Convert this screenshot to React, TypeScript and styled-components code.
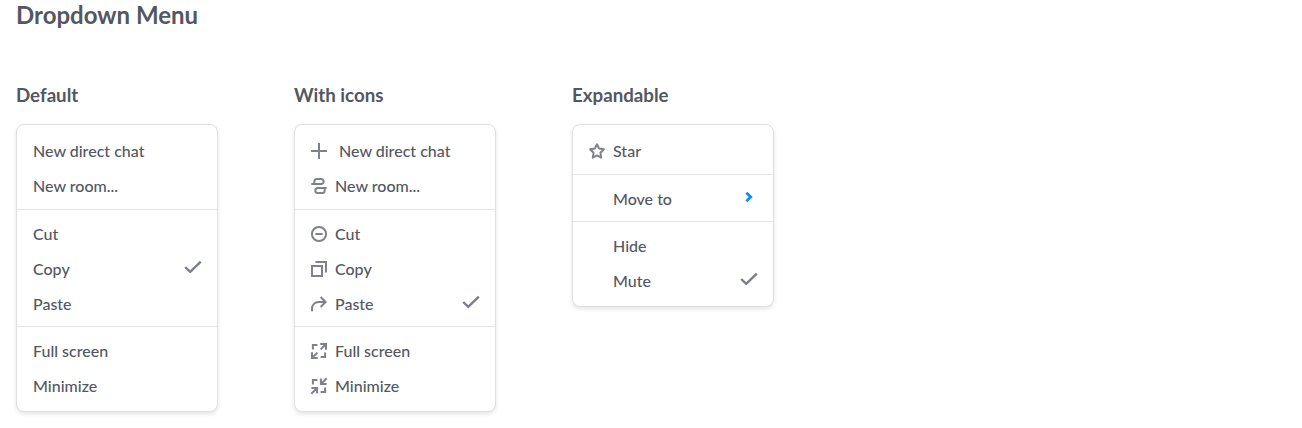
import React from "react";
import styled, { createGlobalStyle } from "styled-components";

const GlobalStyle = createGlobalStyle`
  body {
    margin: 0;
    background: #fff;
    color: #535762;
    font-family: Lato, "Liberation Sans", sans-serif;
    font-size: 16px;
    -webkit-font-smoothing: antialiased;
  }
`;

const Page = styled.main`
  box-sizing: border-box;
  min-height: 100vh;
  padding: 0 16px;
`;

const Title = styled.h1`
  margin: 0;
  height: 83px;
  font-size: 24px;
  line-height: 30px;
  font-weight: 700;
`;

const Columns = styled.div`
  display: flex;
  align-items: flex-start;
  gap: 76px;
`;

const Column = styled.section`
  width: 202px;
`;

const Heading = styled.h2`
  margin: 0 0 17px;
  font-size: 18.72px;
  line-height: 24px;
  font-weight: 700;
`;

const Menu = styled.div`
  box-sizing: border-box;
  border: 1px solid #dfe0e2;
  border-radius: 8px;
  background: #fff;
  box-shadow: 0 2px 4px rgba(0, 0, 0, 0.11);
`;

const Group = styled.div`
  padding: 6px 16px 5px;

  & + & {
    border-top: 1px solid #e4e5e6;
  }
  &:first-child {
    padding-top: 8px;
    padding-bottom: 6px;
  }
  &:last-child {
    padding-bottom: 8px;
  }
`;

const Row = styled.div<{ $indent?: boolean }>`
  display: flex;
  align-items: center;
  height: 35px;
  padding-left: ${(p) => (p.$indent ? 24 : 0)}px;
`;

const Label = styled.span`
  flex: 1;
  font-weight: 500;
  line-height: 20px;
  white-space: nowrap;
`;

const Icon = styled.svg<{ $gap?: number }>`
  flex: none;
  width: 16px;
  height: 16px;
  margin-right: ${(p) => p.$gap ?? 8}px;
  overflow: visible;
  fill: none;
  stroke: #7f828b;
  stroke-width: 2;
`;

const Mark = styled.svg<{ $accent?: boolean }>`
  flex: none;
  width: ${(p) => (p.$accent ? 8 : 18)}px;
  height: 12px;
  margin: 0 ${(p) => (p.$accent ? 4 : -1)}px 3px 0;
  overflow: visible;
  fill: none;
  stroke: ${(p) => (p.$accent ? "#0d8cf8" : "#7b7f88")};
  stroke-width: ${(p) => (p.$accent ? 2.8 : 2.4)};
`;

type IconName = "plus" | "room" | "cut" | "copy" | "paste" | "full" | "min" | "star";

const drawings: Record<IconName, React.ReactNode> = {
  plus: <path d="M8 0v16M0 8h16" />,
  room: (
    <>
      <path d="M.3 5.9h9.9A2.4 2.4 0 0 0 12.6 3.5 2.5 2.5 0 0 0 10.1 1H5.8a2.5 2.5 0 0 0-2.5 2.5v2.4" />
      <path d="M15.7 9.9H6.8a2.5 2.5 0 0 0 0 5h4.4a2.5 2.5 0 0 0 2.5-2.5V9.9" />
    </>
  ),
  cut: (
    <>
      <circle cx="8" cy="8" r="7.1" />
      <path d="M4.4 8h7.2" />
    </>
  ),
  copy: <path d="M1 5h10v10H1zM4.4 1H15v10.6" />,
  paste: <path d="M1 15.2v-2.7a6.5 6.5 0 0 1 6.5-6.5h7M9.6 1l5 5-5 5" />,
  full: (
    <path d="M1.9 6.4V1.9h4.5M9.6 14.1h4.5V9.6M9.2 1H15v5.8M9.6 6.4 15 1M1 9.2V15h5.8M6.4 9.6 1 15" />
  ),
  min: (
    <path d="M1.9 6.4V1.9h4.5M9.6 14.1h4.5V9.6M9.9.4v5.7h5.7M10 6l5.7-5.7M.4 9.9h5.7v5.7M6 10 .3 15.7" />
  ),
  star: (
    <path
      strokeLinejoin="round"
      d="m8 1.3 2.1 4.3 4.8.7-3.5 3.4.8 4.9L8 12.4l-4.2 2.2.8-4.9L1.1 6.3l4.8-.7z"
    />
  ),
};

interface Item {
  label: string;
  icon?: IconName;
  mark?: "check" | "arrow";
  indent?: boolean;
}

const MenuItem = ({ label, icon, mark, indent }: Item) => (
  <Row $indent={indent}>
    {icon && (
      <Icon viewBox="0 0 16 16" $gap={icon === "plus" ? 12 : 8}>
        {drawings[icon]}
      </Icon>
    )}
    <Label>{label}</Label>
    {mark === "check" && (
      <Mark viewBox="0 0 18 12">
        <path d="m1.2 6 5 4.8L16.8.7" />
      </Mark>
    )}
    {mark === "arrow" && (
      <Mark viewBox="0 0 8 12" $accent>
        <path d="m1.4 1.8 4.3 4.2-4.3 4.2" />
      </Mark>
    )}
  </Row>
);

const menus: { title: string; groups: Item[][] }[] = [
  {
    title: "Default",
    groups: [
      [{ label: "New direct chat" }, { label: "New room..." }],
      [{ label: "Cut" }, { label: "Copy", mark: "check" }, { label: "Paste" }],
      [{ label: "Full screen" }, { label: "Minimize" }],
    ],
  },
  {
    title: "With icons",
    groups: [
      [
        { label: "New direct chat", icon: "plus" },
        { label: "New room...", icon: "room" },
      ],
      [
        { label: "Cut", icon: "cut" },
        { label: "Copy", icon: "copy" },
        { label: "Paste", icon: "paste", mark: "check" },
      ],
      [
        { label: "Full screen", icon: "full" },
        { label: "Minimize", icon: "min" },
      ],
    ],
  },
  {
    title: "Expandable",
    groups: [
      [{ label: "Star", icon: "star" }],
      [{ label: "Move to", indent: true, mark: "arrow" }],
      [
        { label: "Hide", indent: true },
        { label: "Mute", indent: true, mark: "check" },
      ],
    ],
  },
];

export default function App() {
  return (
    <Page>
      <GlobalStyle />
      <Title>Dropdown Menu</Title>
      <Columns>
        {menus.map((menu) => (
          <Column key={menu.title}>
            <Heading>{menu.title}</Heading>
            <Menu>
              {menu.groups.map((items, i) => (
                <Group key={i}>
                  {items.map((item) => (
                    <MenuItem key={item.label} {...item} />
                  ))}
                </Group>
              ))}
            </Menu>
          </Column>
        ))}
      </Columns>
    </Page>
  );
}
